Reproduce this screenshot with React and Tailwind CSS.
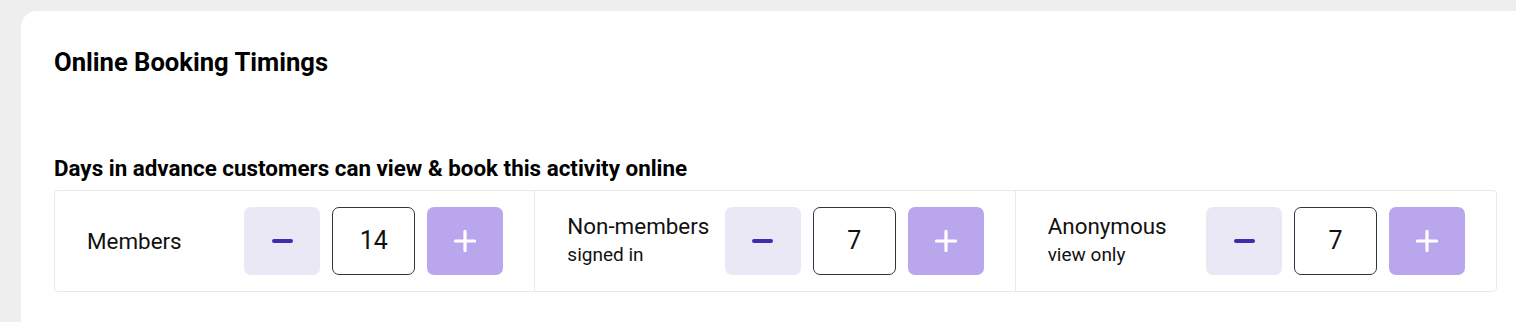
import React from "react";

function Stepper({ label, sub, value }) {
  return (
    <div className="flex items-center justify-between pl-[32px] pr-[31px] py-4">
      <div className="flex flex-col">
        <span className="text-[22.4px] leading-[28px] text-[#111]">{label}</span>
        {sub && <span className="text-[19px] leading-[30px] text-[#111]">{sub}</span>}
      </div>
      <div className="flex items-center gap-[12px]">
        <button className="w-[76px] h-[68px] rounded-[7px] bg-[#ebe8f6] flex items-center justify-center">
          <span className="block w-[21px] h-[3.5px] rounded-full bg-[#3b2dab]" />
        </button>
        <div className="w-[83px] h-[68px] rounded-[7px] border border-[#2f3542] bg-white flex items-center justify-center text-[25px] text-[#111]">
          {value}
        </div>
        <button className="w-[76px] h-[68px] rounded-[7px] bg-[#baa6ec] flex items-center justify-center">
          <svg width="22" height="22" viewBox="0 0 22 22">
            <path d="M11 1.5V20.5M1.5 11H20.5" stroke="white" strokeWidth="3.2" strokeLinecap="round" />
          </svg>
        </button>
      </div>
    </div>
  );
}

export default function App() {
  return (
    <div className="w-[1516px] h-[322px] bg-[#eeeeee] pt-[11px] pl-[21px] overflow-hidden" style={{ fontFamily: "Roboto, 'Liberation Sans', sans-serif" }}>
      <div className="bg-white rounded-tl-[16px] h-full pl-[33px] pr-[19px] pt-[36px]">
        <h1 className="text-[25.6px] leading-[30px] font-bold text-black">Online Booking Timings</h1>
        <h2 className="mt-[77px] text-[22.4px] leading-[28px] font-bold text-black">
          Days in advance customers can view &amp; book this activity online
        </h2>
        <div className="mt-[8px] grid grid-cols-3 border border-[#e9e9e9] rounded-[4px] divide-x divide-[#e9e9e9]">
          <Stepper label="Members" value="14" />
          <Stepper label="Non-members" sub="signed in" value="7" />
          <Stepper label="Anonymous" sub="view only" value="7" />
        </div>
      </div>
    </div>
  );
}
